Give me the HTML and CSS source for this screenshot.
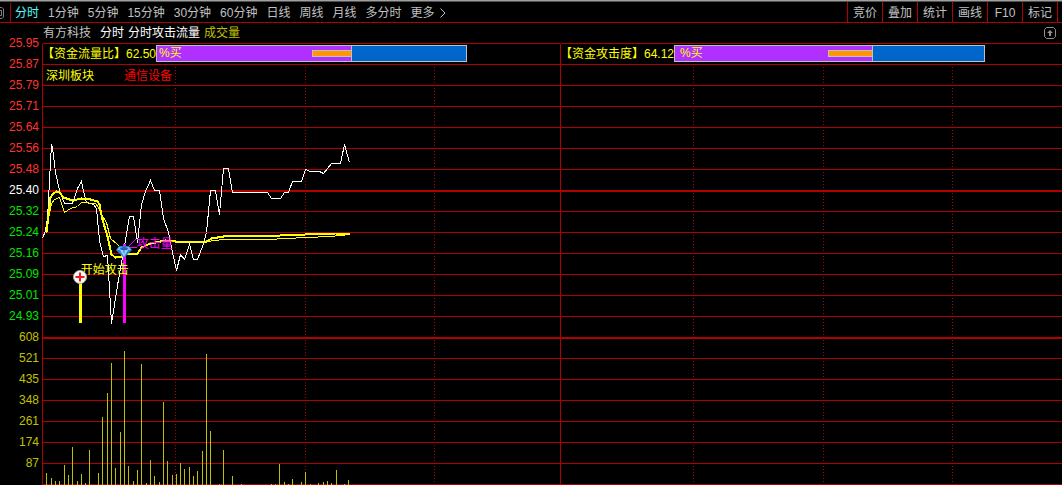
FILE: index.html
```html
<!DOCTYPE html>
<html lang="zh-CN">
<head>
<meta charset="utf-8">
<title>有方科技 分时</title>
<link rel="stylesheet" href="styles.css">
</head>
<body>
<header class="toolbar">
  <nav class="periods">
    <button class="stub" aria-label="面板"><svg width="4" height="12" viewBox="0 0 4 12" fill="none" stroke="#808080"><path d="M0 .5H2L3.5 2V10L2 11.5H0M0 3.500H1.500V8.500H0"/></svg></button>
    <button class="period active">分时</button>
    <button class="period">1分钟</button>
    <button class="period">5分钟</button>
    <button class="period">15分钟</button>
    <button class="period">30分钟</button>
    <button class="period">60分钟</button>
    <button class="period">日线</button>
    <button class="period">周线</button>
    <button class="period">月线</button>
    <button class="period">多分时</button>
    <button class="period more">更多<svg width="6" height="10" viewBox="0 0 6 10" fill="none" stroke="#c0c0c0"><path d="M.5 .5L5 5L.5 9.500"/></svg></button>
  </nav>
  <div class="tools">
    <button class="tool">竞价</button>
    <button class="tool">叠加</button>
    <button class="tool">统计</button>
    <button class="tool">画线</button>
    <button class="tool">F10</button>
    <button class="tool">标记</button>
    <span class="tail"></span>
  </div>
</header>
<main class="board">
  <div class="axis">
    <span class="up">25.95</span><span class="up">25.87</span><span class="up">25.79</span><span class="up">25.71</span><span class="up">25.64</span><span class="up">25.56</span><span class="up">25.48</span>
    <span class="flat">25.40</span>
    <span class="down">25.32</span><span class="down">25.24</span><span class="down">25.16</span><span class="down">25.09</span><span class="down">25.01</span><span class="down">24.93</span>
    <span class="vol">608</span><span class="vol">521</span><span class="vol">435</span><span class="vol">348</span><span class="vol">261</span><span class="vol">174</span><span class="vol">87</span>
  </div>
  <div class="content">
    <div class="titlebar">
      <span class="name">有方科技</span><span class="kind">分时</span><span class="kind">分时攻击流量</span><span class="volume-title">成交量</span>
      <button class="expand" aria-label="展开"><svg width="12" height="12" viewBox="0 0 12 12"><path d="M2.500 .5H9.500L11.500 2.500V9.500L9.500 11.500H2.500L.5 9.500V2.500Z" fill="none" stroke="#909090"/><path d="M6 3L9 6H7V9H5V6H3Z" fill="#909090"/></svg></button>
    </div>
    <div class="panels">
      <section class="panel first">
        <svg class="plot" viewBox="41.5 42.5 518 442" preserveAspectRatio="none" shape-rendering="crispEdges" fill="none">
          <path class="grid" d="M42 43V485M42 43H560M42 64H560M42 85H560M42 106H560M42 127H560M42 148H560M42 169H560M42 211H560M42 232H560M42 253H560M42 274H560M42 295H560M42 316H560M42 358H560M42 379H560M42 400H560M42 421H560M42 442H560M42 463H560M41 484H560"/>
          <path class="grid bold" d="M42 190.5H560M42 337.5H560"/>
          <path class="dots" d="M175 66.500V484M305 66.500V484M434 66.500V484"/>
          <path class="bars" d="M46 484V472M51 484V477M55 484V480M59 484V480M64 484V464M68 484V474M72 484V446M77 484V480M81 484V473M85 484V482M89 484V449M98 484V472M102 484V416M107 484V392M111 484V362M115 484V467M120 484V431M124 484V350M128 484V465M133 484V480M137 484V469M141 484V363M146 484V482M150 484V459M154 484V475M159 484V481M163 484V401M167 484V460M172 484V474M176 484V473M180 484V462M184 484V468M189 484V466M193 484V475M197 484V470M202 484V450M206 484V353M210 484V430M219 484V483M223 484V449M232 484V475M241 484V483M271 484V483M275 484V483M279 484V463M284 484V481M288 484V483M292 484V478M301 484V481M305 484V471M310 484V483M318 484V482M323 484V481M327 484V480M331 484V482M336 484V469M344 484V483M348 484V479"/>
          <path class="price" d="M42 238L45 230L47 218L49 180L51 144L52 147L55 172L59 190L64 203H72L77 188L81 181L84 195L86 202L93 204L96 208L99 240L103 256L107 255L111 323L117 285L121 262L125 240L129 216H133L137 242L141 204L145 191L150 180L154 190H159L163 218L168 232L172 252L176 270L180 254L184 259L189 244L193 259H197L202 246L206 232L210 190H215L219 214L223 168H228L232 192H267L271 198H280L284 192H288L292 181H301L305 169L310 171H319L323 173L331 163H340L344 144L349 162"/>
          <path class="mean" d="M46 233L48 218L51 203L54 199L59 197L64 212L70 208L77 206L81 202L95 203L98 207L101 214L106 222L110 238L117 244L121 248M206 241L223 239H267L305 237L330 236L349 234"/>
          <path class="mean thick" d="M46 232L50 197L53 193L56 191L59 192L63 197L72 200L81 198L90 199L97 201L99 204L102 219L107 236L111 254L115 257L121 256L124 253H137L141 247L150 243L165 240L175 241H206L211 238L223 236L280 235L305 234L335 233H349"/>
          <path class="start" d="M80 277V322"/>
          <path class="attack" d="M124 243V322"/>
          <path class="pointer" d="M127 247L135 239M127 247H136"/>
        </svg>
        <div class="ratio"><span class="caption">【资金流量比】62.50</span>
          <div class="gauge"><div class="buy b1">%买<i class="mark m1"></i></div></div></div>
        <div class="tags"><span>深圳板块</span><span class="industry">通信设备</span></div>
        <span class="note note-start">开始攻击</span>
        <span class="note note-attack">攻击量</span>
        <svg class="icon cross" width="14" height="14" viewBox="0 0 14 14"><circle cx="7" cy="7" r="6.500" fill="#fff" stroke="#b0a8a0"/><path d="M7 2.500V11.500M2.500 7H11.500" stroke="#f01818" stroke-width="2"/></svg>
        <svg class="icon gem" width="16" height="12" viewBox="0 0 16 12"><path d="M3 0H13L16 4L8 12L0 4Z" fill="#2f7fd6"/><path d="M3 1H13L15 4H1Z" fill="#79baf4"/><path d="M4 2Q8 0 12 2L11 4H5Z" fill="#1e62b8"/><path d="M4 4L8 11L12 4Z" fill="#9ad2ff"/><path d="M7 4L8 9L9 4Z" fill="#3c8be0"/></svg>
      </section>
      <section class="panel second">
        <svg class="plot" viewBox="559.5 42.5 502 442" preserveAspectRatio="none" shape-rendering="crispEdges" fill="none">
          <path class="grid" d="M560 43V485M560 43H1062M560 64H1062M560 85H1062M560 106H1062M560 127H1062M560 148H1062M560 169H1062M560 211H1062M560 232H1062M560 253H1062M560 274H1062M560 295H1062M560 316H1062M560 358H1062M560 379H1062M560 400H1062M560 421H1062M560 442H1062M560 463H1062M560 484H1062"/>
          <path class="grid bold" d="M560 190.5H1062M560 337.5H1062"/>
          <path class="dots" d="M693 66.500V484M823 66.500V484M952 66.500V484"/>
        </svg>
        <div class="ratio"><span class="caption">【资金攻击度】64.12</span>
          <div class="gauge"><div class="buy b2">%买<i class="mark m2"></i></div></div></div>
      </section>
    </div>
  </div>
</main>
</body>
</html>
```
FILE: styles.css
```css
* { box-sizing: border-box; }
body {
  margin: 0;
  background: #000;
  color: #c0c0c0;
  font: 12px/20px "Liberation Sans", "Noto Sans CJK SC", sans-serif;
  white-space: nowrap;
  overflow: hidden;
}
button {
  margin: 0;
  padding: 0;
  border: 0;
  background: none;
  color: inherit;
  font: inherit;
}
.toolbar {
  display: flex;
  justify-content: space-between;
  height: 23px;
  border-top: 1px solid #a0a0a0;
  border-bottom: 1px solid #b00000;
  box-shadow: inset 0 1px #505050;
}
.periods { display: flex; padding-top: 2px; }
.periods button { display: flex; align-items: center; }
.periods .stub { width: 11px; border-right: 1px solid #b00000; margin-right: 4px; }
.period { margin-right: 9px; }
.period.active { color: #54fcfc; }
.more { gap: 5px; }
.tools { display: flex; padding-top: 1px; }
.tool { width: 35px; padding-top: 1px; border-left: 1px solid #b00000; }
.tail { width: 5px; border-left: 1px solid #b00000; }
.board { display: flex; }
.axis {
  display: flex;
  flex-direction: column;
  width: 42px;
  padding: 10px 3px 0 0;
  text-align: right;
  line-height: 21px;
}
.up { color: #ff3232; }
.flat { color: #fff; }
.down { color: #00e600; }
.vol, .volume-title { color: #c0c000; }
.content { flex: 1; min-width: 0; }
.titlebar { display: flex; height: 20px; padding: 0 6px 0 1px; }
.name { margin-right: 9px; }
.kind { color: #fff; margin-right: 4px; }
.expand { display: flex; align-items: center; margin-left: auto; }
.panels { display: flex; }
.panel { position: relative; height: 442px; }
.first { flex: 518; }
.second { flex: 502; }
.plot { position: absolute; inset: 0; width: 100%; height: 100%; }
.grid { stroke: #b00000; }
.bold { stroke-width: 2; }
.dots { stroke: #b00000; stroke-dasharray: 1 2; }
.bars { stroke: #c0c000; }
.price { stroke: #fff; }
.mean { stroke: #ff0; }
.thick { stroke-width: 2; }
.start { stroke: #ff0; stroke-width: 3; }
.attack { stroke: #f0f; stroke-width: 3; }
.pointer { stroke: #f0f; }
.ratio {
  position: relative;
  display: flex;
  align-items: center;
  height: 21px;
  color: #ff0;
}
.caption { width: 114px; }
.gauge {
  display: flex;
  width: 60%;
  height: 17px;
  border: 1px solid #c0c0c0;
  background: #0066cc;
}
.second .gauge { width: 62%; }
.buy {
  position: relative;
  padding-left: 2px;
  border-right: 1px solid #c0c0c0;
  background: #b030ff;
  line-height: 15px;
}
.b1 { width: 63%; }
.b2 { width: 64%; padding-left: 5px; }
.mark {
  position: absolute;
  right: 0;
  top: 4px;
  height: 7px;
  border: 1px solid #c0c0c0;
  border-right: 0;
  background: #ff9800;
}
.m1 { width: 39px; }
.m2 { width: 44px; }
.tags { position: relative; display: flex; gap: 30px; padding-left: 4px; line-height: 24px; color: #ff0; }
.industry { color: #f00; }
.note { position: absolute; line-height: 16px; }
.note-start { left: 7.5%; top: 219px; color: #ff0; }
.note-attack { left: 18.3%; top: 193px; color: #f0f; }
.icon { position: absolute; }
.cross { left: 6%; top: 227px; }
.gem { left: 14.3%; top: 203px; }
```
